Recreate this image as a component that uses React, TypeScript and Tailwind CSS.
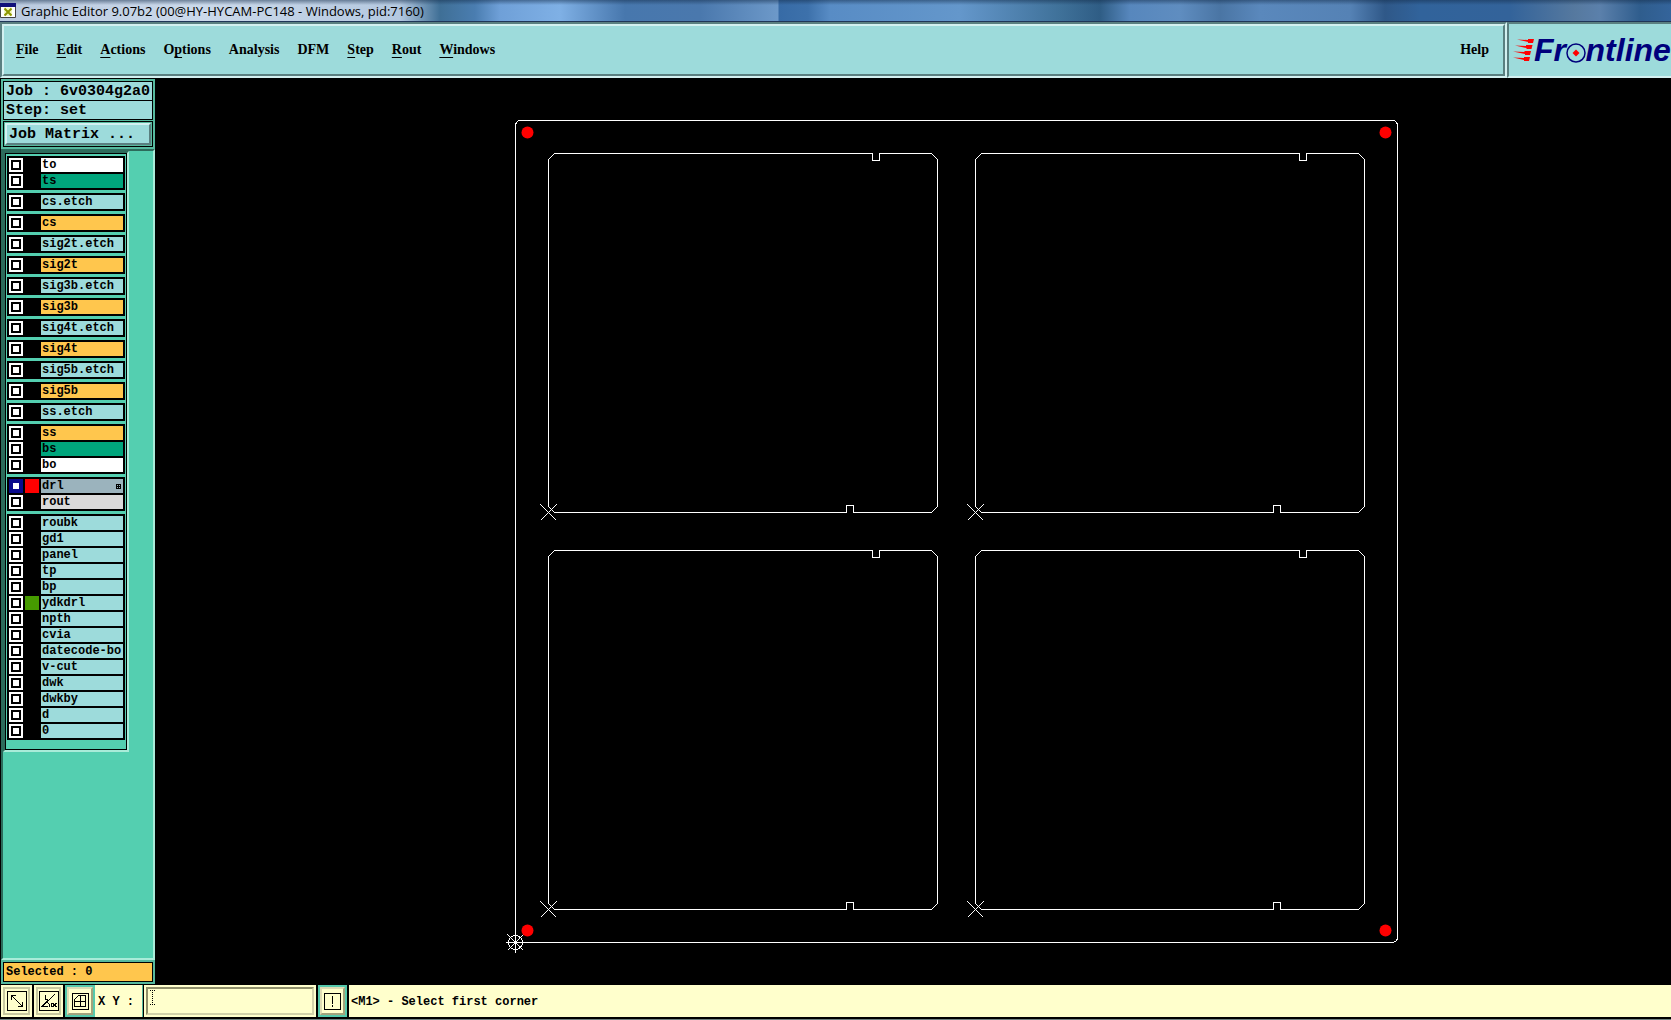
import { useState } from 'react'
import clsx from 'clsx'

type Layer = { name: string; tone: string; swatch?: string; active?: boolean }

const etch = 'bg-[#9ddbdb]'
const copper = 'bg-[#ffc64d]'
const mask = 'bg-[#00a57c]'

// each inner array is one boxed group in the layer list
const layerGroups: Layer[][] = [
  [
    { name: 'to', tone: 'bg-white' },
    { name: 'ts', tone: mask },
  ],
  [{ name: 'cs.etch', tone: etch }],
  [{ name: 'cs', tone: copper }],
  [{ name: 'sig2t.etch', tone: etch }],
  [{ name: 'sig2t', tone: copper }],
  [{ name: 'sig3b.etch', tone: etch }],
  [{ name: 'sig3b', tone: copper }],
  [{ name: 'sig4t.etch', tone: etch }],
  [{ name: 'sig4t', tone: copper }],
  [{ name: 'sig5b.etch', tone: etch }],
  [{ name: 'sig5b', tone: copper }],
  [{ name: 'ss.etch', tone: etch }],
  [
    { name: 'ss', tone: copper },
    { name: 'bs', tone: mask },
    { name: 'bo', tone: 'bg-white' },
  ],
  [
    { name: 'drl', tone: 'bg-[#9bb3bd]', swatch: 'bg-[#ff0000]', active: true },
    { name: 'rout', tone: 'bg-[#dadada]' },
  ],
  [
    { name: 'roubk', tone: etch },
    { name: 'gd1', tone: etch },
    { name: 'panel', tone: etch },
    { name: 'tp', tone: etch },
    { name: 'bp', tone: etch },
    { name: 'ydkdrl', tone: etch, swatch: 'bg-[#469b00]' },
    { name: 'npth', tone: etch },
    { name: 'cvia', tone: etch },
    { name: 'datecode-bo', tone: etch },
    { name: 'v-cut', tone: etch },
    { name: 'dwk', tone: etch },
    { name: 'dwkby', tone: etch },
    { name: 'd', tone: etch },
    { name: '0', tone: etch },
  ],
]

// [before, mnemonic, after]
const menus = [
  ['', 'F', 'ile'],
  ['', 'E', 'dit'],
  ['', 'A', 'ctions'],
  ['O', 'p', 'tions'],
  ['Analysis', '', ''],
  ['DFM', '', ''],
  ['', 'S', 'tep'],
  ['', 'R', 'out'],
  ['', 'W', 'indows'],
]

const sunken = 'border-2 border-t-[#5a7f80] border-l-[#5a7f80] border-b-[#d3f0f0] border-r-[#d3f0f0]'
const raised = 'border-2 border-t-[#d3f0f0] border-l-[#d3f0f0] border-b-[#5a7f80] border-r-[#5a7f80]'

function TitleBar() {
  return (
    <header className="flex h-[22px] items-center gap-[5px] border-b border-[#1f3557] bg-[linear-gradient(180deg,rgba(20,45,75,0.5),rgba(20,45,75,0)_5px),linear-gradient(90deg,#b9c9df_0px,#cbd9ea_200px,#b4c8e0_400px,#3f6f96_440px,#4a7db0_475px,#6fa0d8_500px,#7fb0e5_560px,#4777ad_625px,#4a78ad_700px,#6d99c9_778px,#376ba6_779px,#3d71ab_808px,#588cc5_830px,#6497cb_960px,#3f7199_1060px,#2f5d85_1100px,#5787bd_1130px,#5f8dc0_1180px,#4a75a4_1220px,#5a88bc_1260px,#5582b5_1350px,#2f5888_1385px,#31639b_1420px,#33639a_1510px,#56799f_1575px,#5b80ab_1600px,#2f5d8d_1640px,#34649b_1671px)]">
      <svg width="16" height="15" viewBox="0 0 16 15" className="shrink-0">
        <path d="M.5.5h15v14H.5z" fill="#fff" stroke="#444" />
        <path d="M0 0h16v4H0z" fill="#10107a" />
        <path d="M4 4.5h8V13H4z" fill="#f4f7c0" />
        <path d="M4.5 5.5l7 7M11.500 5.500l-7 7" stroke="#8c9600" strokeWidth="2" />
      </svg>
      <h1 className="font-['Open_Sans',sans-serif] text-[13px] leading-5 whitespace-nowrap text-black">
        Graphic Editor 9.07b2 (00@HY-HYCAM-PC148 - Windows, pid:7160)
      </h1>
    </header>
  )
}

function MenuBar() {
  return (
    <div className="flex h-14 bg-[#9ddbdb] font-['Liberation_Serif',serif] text-[14px] leading-5 font-bold text-black">
      <div className={clsx('flex flex-1', sunken)}>
        <nav className={clsx('flex flex-1 items-center gap-[18px] pr-[14px] pl-3', raised)}>
          {menus.map(([before, key, after]) => (
            <button key={before + key + after} type="button">
              {before}
              {key && <span className="underline decoration-1 underline-offset-[3px]">{key}</span>}
              {after}
            </button>
          ))}
          <button type="button" className="ml-auto">Help</button>
        </nav>
      </div>
      <div className={clsx('flex w-[164px] items-center overflow-hidden border-r-0 pl-[3px]', sunken)}>
        <Logo />
      </div>
    </div>
  )
}

function Logo() {
  return (
    <div className="flex items-center">
      <svg width="22" height="24" viewBox="0 0 22 24" fill="#f00" className="shrink-0">
        <path d="M5 1.500L16 2V1h6l-1 4h-5V4z" />
        <path d="M3 7.500L14 8V7h6.500l-1 4h-5v-1z" />
        <path d="M1 13.500L12.500 14v-1h6.500l-1 4h-5v-1z" />
        <path d="M1 19.500L12 20v-1h6l-1 4h-5v-1z" />
      </svg>
      <span className="font-['Liberation_Sans',sans-serif] text-[32px] leading-10 font-bold whitespace-nowrap text-[#00007c] italic">
        Fr
        <span className="relative text-transparent">
          o
          <svg width="20" height="20" viewBox="0 0 20 20" className="absolute bottom-[5px] left-0">
            <circle cx="10" cy="10" r="9" fill="#9ddbdb" stroke="#00007c" strokeWidth="1.500" />
            <path d="M10 6.500l3.500 3.500-3.500 3.500L6.500 10z" fill="#f00" />
          </svg>
        </span>
        ntline
      </span>
    </div>
  )
}

function LayerRow({ layer }: { layer: Layer }) {
  const [on, setOn] = useState(false)
  const id = `layer-${layer.name}`

  return (
    <div className="flex h-[14px] gap-[2px]">
      <input
        id={id}
        type="checkbox"
        checked={on}
        onChange={(e) => setOn(e.target.checked)}
        className={clsx(
          'h-[14px] w-[14px] shrink-0 appearance-none border-2 outline-2 -outline-offset-4',
          layer.active
            ? 'border-[#0a0a8c] bg-white outline-[#0a0a8c]'
            : 'border-white bg-white outline-black checked:bg-black'
        )}
      />
      <span className={clsx('w-[14px] shrink-0', layer.swatch)} />
      <label
        htmlFor={id}
        className={clsx('flex flex-1 items-center justify-between pl-px text-[12px] leading-[14px] whitespace-nowrap', layer.tone)}
      >
        {layer.name}
        {layer.active && (
          <svg width="5" height="5" viewBox="0 0 5 5" shapeRendering="crispEdges" className="mr-[2px] shrink-0">
            <path d="M.5.5h4v4h-4zM2.500 0v5M0 2.500h5" fill="none" stroke="#000" />
          </svg>
        )}
      </label>
    </div>
  )
}

function Sidebar() {
  return (
    <aside className="flex w-[155px] shrink-0 flex-col border-b border-l border-black bg-[#54cfb0] font-['Liberation_Mono',monospace] font-bold text-black">
      <div className="flex flex-col gap-px bg-[#56b99e] p-[2px]">
        <div className="border border-black bg-[#9ddbdb] text-[15px] leading-5">
          <p className="h-[19px] border-b border-black pl-[2px] whitespace-pre">Job : 6v0304g2a0</p>
          <p className="h-[18px] pl-[2px]">Step: set</p>
        </div>
        <div className="border border-black p-px">
          <button type="button" className={clsx('flex h-[22px] w-full items-start bg-[#9ddbdb] pl-[2px] text-[15px] leading-5', raised)}>
            Job Matrix ...
          </button>
        </div>
      </div>

      <div className="flex-1 border-2 border-t-[#2c6b5b] border-r-[#a9ecd9] border-b-[#a9ecd9] border-l-[#2c6b5b]">
        <div className="w-[126px] border-2 border-t-[#2c6b5b] border-r-[#a9ecd9] border-b-[#a9ecd9] border-l-[#2c6b5b]">
          <div className="flex flex-col gap-[3px] border border-black px-px pt-[2px] pb-[9px]">
            {layerGroups.map((group) => (
              <div key={group[0].name} className="flex flex-col gap-[2px] bg-black p-[2px]">
                {group.map((layer) => (
                  <LayerRow key={layer.name} layer={layer} />
                ))}
              </div>
            ))}
          </div>
        </div>
      </div>

      <div className="bg-[#56b99e] p-[2px]">
        <p className="border border-black bg-[#ffc64d] pl-[2px] text-[12px] leading-[18px]">Selected : 0</p>
      </div>
    </aside>
  )
}

// board outline with the two routed tabs, drawn from its top left corner
function Board({ x, y }: { x: number; y: number }) {
  return (
    <g transform={`translate(${x} ${y})`}>
      <path d="M6 0H324V7H331V0H383L389 6V353L383 359H305V352H298V359H6L0 353V6Z" />
      <path d="M-8 351L8 367M8 351L-8 367" />
    </g>
  )
}

function Canvas() {
  return (
    <main className="min-w-0 flex-1 bg-black">
      <svg viewBox="155 79 1516 906" className="block h-full w-full" fill="none" stroke="#fff" shapeRendering="crispEdges">
        <g transform="translate(.5 .5)">
          <path d="M520 120H1392Q1397 120 1397 126V936Q1397 942 1391 942H515V126Q515 120 520 120Z" />
          <Board x={548} y={153} />
          <Board x={975} y={153} />
          <Board x={548} y={550} />
          <Board x={975} y={550} />
          <circle cx="515" cy="942" r="7" />
          <path d="M505 942h20M515 932v20M507 934l16 16M523 934l-16 16" />
          <circle cx="515" cy="942" r="2" fill="#fff" stroke="none" />
        </g>
        <g fill="#f00" stroke="none" shapeRendering="auto">
          <circle cx="527.500" cy="132.500" r="6" />
          <circle cx="1385.500" cy="132.500" r="6" />
          <circle cx="527.500" cy="930.500" r="6" />
          <circle cx="1385.500" cy="930.500" r="6" />
        </g>
      </svg>
    </main>
  )
}

const toolButton = 'flex h-full items-center justify-center border-2 bg-[#ffffcc]'
const toolRaised = 'border-t-[#dedcb4] border-l-[#dedcb4] border-b-[#a3a37c] border-r-[#a3a37c]'

function StatusBar() {
  return (
    <footer className="flex h-[35px] shrink-0 gap-[2px] border-b border-[#6f8080] bg-black pb-[2px] pl-px font-['Liberation_Mono',monospace] text-[12px] font-bold text-black">
      <div className="w-[31px] bg-[#ffffcc] p-[2px]">
        <button type="button" aria-label="Zoom" className={clsx(toolButton, 'w-full border-[#c8c8a0]')}>
          <svg width="20" height="20" viewBox="0 0 20 20" fill="none" stroke="#000" shapeRendering="crispEdges" className="shrink-0">
            <path d="M.5.5h19v19H.5zM4.500 4.500l11 11M4.500 9V4.500H9M11 15.500h4.500V11" />
          </svg>
        </button>
      </div>
      <div className="w-[29px] bg-[#ffffcc] p-[2px]">
        <button type="button" aria-label="Angle" className={clsx(toolButton, 'w-full border-[#c8c8a0]')}>
          <svg width="20" height="20" viewBox="0 0 20 20" fill="none" stroke="#000" shapeRendering="crispEdges" className="shrink-0">
            <path d="M.5.5h19v19H.5zM16 3L3 15.500h6M6.500 4v4.500H9M8 11q3 2 2 5M12.500 12.500h2v3h-2zM17.500 12l-2 2 2 2" />
          </svg>
        </button>
      </div>
      <div className="flex">
        <div className="w-[30px] bg-[#56c9ac] p-[2px]">
          <button type="button" aria-label="Grid" className={clsx(toolButton, toolRaised, 'w-full')}>
            <svg width="17" height="17" viewBox="0 0 17 17" fill="none" stroke="#000" shapeRendering="crispEdges" className="shrink-0">
              <path d="M.5.5h16v16H.5zM6.500 2.500h7v11h-11v-7zM8.500 2v12M2 8.500h12" />
            </svg>
          </button>
        </div>
        <label htmlFor="xy" className="w-12 border-r border-[#56b99e] bg-[#ffffcc] pt-[2px] pl-[3px] leading-[30px] whitespace-nowrap">
          X Y :
        </label>
      </div>
      <div className="relative -ml-px w-[172px] bg-[#ffffcc] p-[2px]">
        <input
          id="xy"
          type="text"
          className="h-full w-full border-2 border-t-[#8f8f6a] border-r-[#d2d2aa] border-b-[#d2d2aa] border-l-[#8f8f6a] bg-[#ffffcc] pl-2 outline-none"
        />
        <svg width="5" height="15" viewBox="0 0 5 15" stroke="#000" strokeDasharray="1 1" shapeRendering="crispEdges" className="pointer-events-none absolute top-[5px] left-[6px]">
          <path d="M0 .5h5M2.500 0v15M0 14.500h5" />
        </svg>
      </div>
      <div className="w-[29px] bg-[#56c9ac] p-[2px]">
        <button type="button" aria-label="Alert" className={clsx(toolButton, toolRaised, 'w-full')}>
          <svg width="17" height="17" viewBox="0 0 17 17" fill="none" stroke="#000" shapeRendering="crispEdges" className="shrink-0">
            <path d="M.5.5h16v16H.5zM8.500 3v8M8.500 12v2" />
          </svg>
        </button>
      </div>
      <p className="flex-1 bg-[#ffffcc] pt-[2px] pl-[2px] leading-[30px] whitespace-nowrap">&lt;M1&gt; - Select first corner</p>
    </footer>
  )
}

export default function App() {
  return (
    <div className="flex h-screen min-h-[900px] flex-col overflow-hidden bg-black">
      <TitleBar />
      <MenuBar />
      <div className="flex min-h-0 flex-1 pt-px">
        <Sidebar />
        <Canvas />
      </div>
      <StatusBar />
    </div>
  )
}
